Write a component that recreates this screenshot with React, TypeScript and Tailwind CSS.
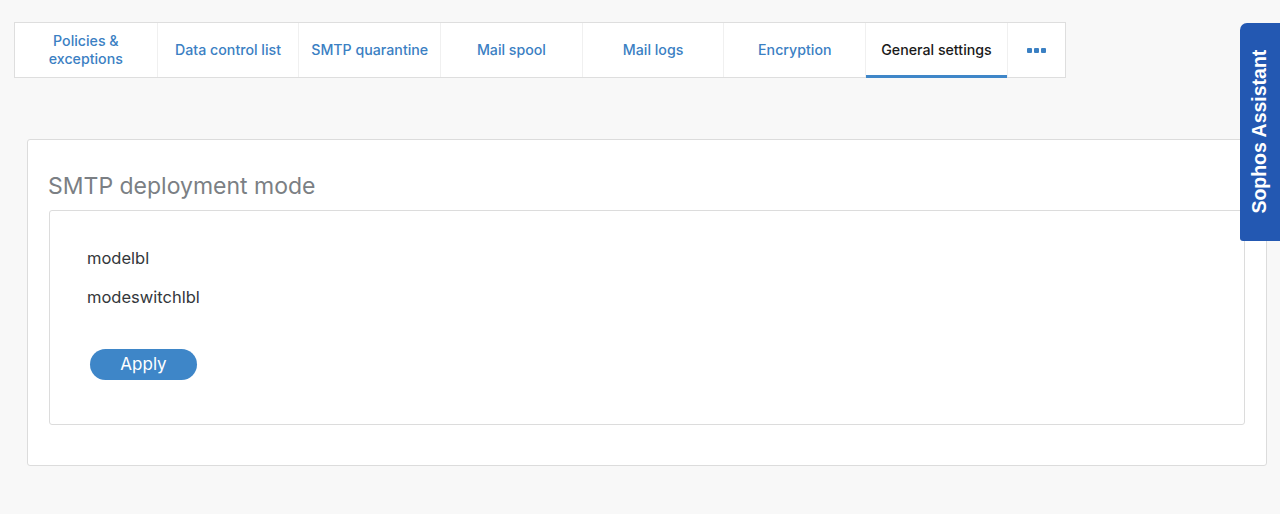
import React from "react";

const tabs = [
  "Policies & exceptions",
  "Data control list",
  "SMTP quarantine",
  "Mail spool",
  "Mail logs",
  "Encryption",
  "General settings",
];

export default function App() {
  const active = "General settings";

  return (
    <div className="relative min-h-[514px] bg-[#f8f8f8] font-['Inter',sans-serif] overflow-hidden">
      {/* TABS */}
      <div className="pt-[22px] pl-[14px]">
        <div className="flex w-[1052px] h-[56px] bg-white border border-[#dedede]">
          {tabs.map((t, i) => (
            <div
              key={t}
              className={
                "relative flex items-center justify-center w-[141.7px] px-1 text-center text-[14.2px] leading-[18px] font-medium " +
                (i > 0 ? "border-l border-[#f0f0f0] " : "") +
                (t === active ? "text-[#1a1a1a]" : "text-[#3b80c3]")
              }
            >
              <span className={t === "Policies & exceptions" ? "w-[90px]" : "whitespace-nowrap"}>{t}</span>
              {t === active && (
                <div className="absolute left-0 right-0 bottom-[-1px] h-[3px] bg-[#3f86c8]" />
              )}
            </div>
          ))}
          <div className="flex flex-1 items-center justify-center gap-[2px] border-l border-[#f0f0f0]">
            <span className="w-[5px] h-[5px] rounded-[1px] bg-[#3b80c3]" />
            <span className="w-[5px] h-[5px] rounded-[1px] bg-[#3b80c3]" />
            <span className="w-[5px] h-[5px] rounded-[1px] bg-[#3b80c3]" />
          </div>
        </div>
      </div>

      {/* CARD */}
      <div className="mt-[61px] ml-[27px] w-[1240px] h-[327px] bg-white border border-[#dcdcdc] rounded-[3px] pt-[32px] pl-[20px]">
        <h2 className="text-[23px] leading-[28px] font-normal text-[#7b7f84]">SMTP deployment mode</h2>
        <div className="mt-[10px] ml-[1px] w-[1196px] h-[215px] border border-[#dcdcdc] rounded-[3px] pt-[36px] pl-[37px]">
          <p className="text-[16.5px] leading-[22px] text-[#33373b]">modelbl</p>
          <p className="mt-[17px] text-[16.5px] leading-[22px] text-[#33373b]">modeswitchlbl</p>
          <button className="block mt-[41px] ml-[3px] w-[107px] h-[31px] rounded-full bg-[#3e86c8] text-white text-[17px] leading-none">
            Apply
          </button>
        </div>
      </div>

      {/* ASSISTANT */}
      <div className="absolute top-[23px] right-0 w-[40px] h-[218px] bg-[#2358b2] rounded-tl-[7px] rounded-bl-[3px] flex items-center justify-center">
        <span className="block -rotate-90 whitespace-nowrap text-white font-bold text-[19.5px] font-['Liberation_Sans',sans-serif]">
          Sophos Assistant
        </span>
      </div>
    </div>
  );
}
